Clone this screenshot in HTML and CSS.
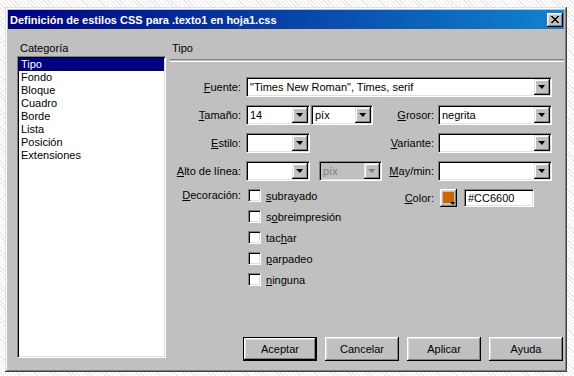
FILE: index.html
```html
<!DOCTYPE html>
<html lang="es">
<head>
  <meta charset="UTF-8">
  <title>Definición de estilos CSS</title>
  <link rel="stylesheet" href="styles.css">
</head>
<body>
<div class="desktop">
  <div class="window">
    <div class="titlebar">
      <span class="title">Definición de estilos CSS para .texto1 en hoja1.css</span>
      <div class="close">
        <svg width="8" height="7" viewBox="0 0 8 7"><path d="M0 0h2v1h1v1h2V1h1V0h2v1H7v1H6v1H5v1h1v1h1v1h1v1H6V6H5V5H3v1H2v1H0V6h1V5h1V4h1V3H2V2H1V1H0z" fill="#000"/></svg>
      </div>
    </div>

    <div class="content">
      <div class="sidebar">
        <div class="caption">Categoría</div>
        <ul class="listbox">
          <li class="selected">Tipo</li>
          <li>Fondo</li>
          <li>Bloque</li>
          <li>Cuadro</li>
          <li>Borde</li>
          <li>Lista</li>
          <li>Posición</li>
          <li>Extensiones</li>
        </ul>
      </div>

      <div class="main">
        <div class="caption heading">Tipo</div>
        <div class="rule"></div>

        <div class="form">
          <label class="lbl r1"><u>F</u>uente:</label>
          <div class="field-wide r1">
            <div class="combo full"><span class="value">"Times New Roman", Times, serif</span><span class="drop"></span></div>
          </div>

          <label class="lbl r2"><u>T</u>amaño:</label>
          <div class="field r2">
            <div class="combo small"><span class="value">14</span><span class="drop"></span></div>
            <div class="combo unit"><span class="value">píx</span><span class="drop"></span></div>
          </div>
          <label class="lbl2 r2"><u>G</u>rosor:</label>
          <div class="field2 r2">
            <div class="combo side"><span class="value">negrita</span><span class="drop"></span></div>
          </div>

          <label class="lbl r3"><u>E</u>stilo:</label>
          <div class="field r3">
            <div class="combo small"><span class="value"></span><span class="drop"></span></div>
          </div>
          <label class="lbl2 r3"><u>V</u>ariante:</label>
          <div class="field2 r3">
            <div class="combo side"><span class="value"></span><span class="drop"></span></div>
          </div>

          <label class="lbl r4"><u>A</u>lto de línea:</label>
          <div class="field r4 spaced">
            <div class="combo small"><span class="value"></span><span class="drop"></span></div>
            <div class="combo unit disabled"><span class="value">píx</span><span class="drop"></span></div>
          </div>
          <label class="lbl2 r4"><u>M</u>ay/min:</label>
          <div class="field2 r4">
            <div class="combo side"><span class="value"></span><span class="drop"></span></div>
          </div>

          <label class="lbl r5 deco"><u>D</u>ecoración:</label>
          <div class="checks r5">
            <div class="check"><span class="box"></span><span><u>s</u>ubrayado</span></div>
            <div class="check"><span class="box"></span><span>s<u>o</u>breimpresión</span></div>
            <div class="check"><span class="box"></span><span>tac<u>h</u>ar</span></div>
            <div class="check"><span class="box"></span><span><u>p</u>arpadeo</span></div>
            <div class="check"><span class="box"></span><span><u>n</u>inguna</span></div>
          </div>
          <label class="lbl2 r5 color-lbl"><u>C</u>olor:</label>
          <div class="field2 r5 color-row">
            <div class="swatch"><span class="chip"></span><span class="arrow"></span></div>
            <div class="textbox">#CC6600</div>
          </div>
        </div>

        <div class="buttons">
          <div class="btn default">Aceptar</div>
          <div class="btn">Cancelar</div>
          <div class="btn">Aplicar</div>
          <div class="btn">Ayuda</div>
        </div>
      </div>
    </div>
  </div>
</div>
</body>
</html>
```

FILE: styles.css
```css
body {
  margin: 0;
  background-color: #f0f0f0;
  font-family: "Liberation Sans", Arial, sans-serif;
  font-size: 11px;
  color: #000000;
}
.desktop {
  width: 574px;
  height: 376px;
  padding: 7px 0 0 5px;
  box-sizing: border-box;
  background-image: repeating-linear-gradient(45deg, #ffffff 0 2px, #e8e8e8 2px 3px);
}
.window {
  width: 562px;
  height: 365px;
  box-sizing: border-box;
  padding: 3px;
  background-color: #c0c0c0;
  box-shadow: inset -1px -1px #404040, inset 1px 1px #dfdfdf, inset -2px -2px #808080, inset 2px 2px #ffffff;
  display: flex;
  flex-direction: column;
}
.titlebar {
  height: 19px;
  flex: none;
  display: flex;
  align-items: center;
  justify-content: space-between;
  padding: 0 1px 0 2px;
  background: linear-gradient(to right, #000080, #1084d0);
}
.title {
  color: #ffffff;
  font-weight: bold;
  font-size: 11px;
}
.close {
  width: 16px;
  height: 14px;
  box-sizing: border-box;
  background-color: #c0c0c0;
  box-shadow: inset -1px -1px #000000, inset 1px 1px #ffffff, inset -2px -2px #808080, inset 2px 2px #dfdfdf;
  display: flex;
  align-items: center;
  justify-content: center;
}
.close svg {
  display: block;
  margin: 0 1px 1px 0;
}
.content {
  flex: 1;
  display: flex;
}
.caption {
  height: 13px;
  line-height: 13px;
  margin-top: 13px;
  padding-left: 3px;
}
.sidebar {
  width: 149px;
  margin-left: 9px;
}
.listbox {
  list-style: none;
  margin: 1px 0 0 0;
  height: 302px;
  box-sizing: border-box;
  background-color: #ffffff;
  border: 1px solid;
  border-color: #808080 #ffffff #ffffff #808080;
  box-shadow: inset 1px 1px #000000, inset -1px -1px #dfdfdf;
  padding: 1px 1px;
}
.listbox li {
  height: 13px;
  line-height: 13px;
  padding-left: 2px;
}
.listbox li.selected {
  background-color: #000080;
  color: #ffffff;
}
.main {
  flex: 1;
  display: flex;
  flex-direction: column;
  padding-bottom: 8px;
}
.heading {
  padding-left: 6px;
}
.rule {
  margin: 4px 0 0 4px;
  height: 1px;
  border-top: 1px solid #808080;
  border-bottom: 1px solid #ffffff;
}
.form {
  margin: 15px 0 0 4px;
  display: grid;
  grid-template-columns: 71px 136px 46px 114px;
  grid-template-rows: 20px 20px 20px 20px auto;
  column-gap: 5px;
  row-gap: 8px;
}
.r1 { grid-row: 1; }
.r2 { grid-row: 2; }
.r3 { grid-row: 3; }
.r4 { grid-row: 4; }
.r5 { grid-row: 5; }
.lbl, .lbl2 {
  text-align: right;
  line-height: 20px;
  white-space: nowrap;
}
.lbl { grid-column: 1; }
.lbl2 { grid-column: 3; margin-right: -1px; }
.field { grid-column: 2; display: flex; gap: 1px; }
.field.spaced { gap: 9px; }
.field-wide { grid-column: 2 / 5; }
.field2 { grid-column: 4; }
.combo {
  height: 20px;
  box-sizing: border-box;
  display: flex;
  align-items: stretch;
  padding: 1px;
  background-color: #ffffff;
  border: 1px solid;
  border-color: #808080 #ffffff #ffffff #808080;
  box-shadow: inset 1px 1px #000000, inset -1px -1px #dfdfdf;
}
.combo.full { width: 306px; }
.combo.small { width: 64px; }
.combo.unit { width: 62px; }
.combo.side { width: 114px; }
.combo.disabled {
  width: 63px;
  background-color: #c0c0c0;
  color: #808080;
}
.combo .value {
  flex: 1;
  line-height: 16px;
  padding-left: 2px;
  white-space: nowrap;
  overflow: hidden;
}
.drop {
  width: 16px;
  flex: none;
  position: relative;
  background-color: #c0c0c0;
  box-shadow: inset -1px -1px #000000, inset 1px 1px #dfdfdf, inset -2px -2px #808080, inset 2px 2px #ffffff;
}
.drop::after {
  content: "";
  position: absolute;
  left: 4px;
  top: 6px;
  border-left: 4px solid transparent;
  border-right: 3px solid transparent;
  border-top: 4px solid #000000;
}
.disabled .drop::after {
  border-top-color: #808080;
}
.deco {
  line-height: 13px;
}
.checks {
  grid-column: 2;
  display: flex;
  flex-direction: column;
  gap: 8px;
  margin-left: 2px;
}
.check {
  display: flex;
  align-items: center;
  height: 13px;
  gap: 5px;
}
.box {
  width: 13px;
  height: 13px;
  box-sizing: border-box;
  background-color: #ffffff;
  border: 1px solid;
  border-color: #808080 #ffffff #ffffff #808080;
  box-shadow: inset 1px 1px #000000, inset -1px -1px #dfdfdf;
}
.color-lbl {
  line-height: 18px;
}
.color-row {
  display: flex;
  gap: 7px;
  padding-left: 2px;
}
.swatch {
  width: 17px;
  height: 18px;
  box-sizing: border-box;
  position: relative;
  padding: 3px;
  background-color: #c0c0c0;
  box-shadow: inset -1px -1px #000000, inset 1px 1px #ffffff, inset -2px -2px #808080, inset 2px 2px #dfdfdf;
}
.chip {
  display: block;
  width: 11px;
  height: 11px;
  background-color: #cc6600;
}
.swatch .arrow {
  position: absolute;
  right: 2px;
  bottom: 2px;
  border-left: 3px solid transparent;
  border-right: 2px solid transparent;
  border-top: 3px solid #000000;
}
.textbox {
  width: 70px;
  height: 18px;
  box-sizing: border-box;
  line-height: 16px;
  padding-left: 3px;
  background-color: #ffffff;
  border: 1px solid;
  border-color: #808080 #ffffff #ffffff #808080;
  box-shadow: inset 1px 1px #000000, inset -1px -1px #dfdfdf;
}
.buttons {
  margin-top: auto;
  display: flex;
  justify-content: flex-end;
  gap: 8px;
  padding-right: 1px;
}
.btn {
  width: 74px;
  height: 24px;
  box-sizing: border-box;
  line-height: 24px;
  text-align: center;
  background-color: #c0c0c0;
  box-shadow: inset -1px -1px #000000, inset 1px 1px #ffffff, inset -2px -2px #808080, inset 2px 2px #dfdfdf;
}
.btn.default {
  border: 1px solid #000000;
  line-height: 22px;
}
```
